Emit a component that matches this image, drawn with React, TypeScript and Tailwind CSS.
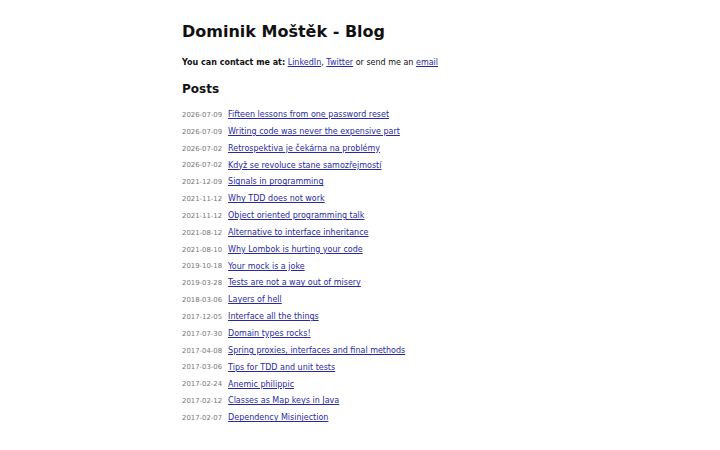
import React from 'react';

const posts: [string, string][] = [
    ['2026-07-09', 'Fifteen lessons from one password reset'],
    ['2026-07-09', 'Writing code was never the expensive part'],
    ['2026-07-02', 'Retrospektiva je čekárna na problémy'],
    ['2026-07-02', 'Když se revoluce stane samozřejmostí'],
    ['2021-12-09', 'Signals in programming'],
    ['2021-11-12', 'Why TDD does not work'],
    ['2021-11-12', 'Object oriented programming talk'],
    ['2021-08-12', 'Alternative to interface inheritance'],
    ['2021-08-10', 'Why Lombok is hurting your code'],
    ['2019-10-18', 'Your mock is a joke'],
    ['2019-03-28', 'Tests are not a way out of misery'],
    ['2018-03-06', 'Layers of hell'],
    ['2017-12-05', 'Interface all the things'],
    ['2017-07-30', 'Domain types rocks!'],
    ['2017-04-08', 'Spring proxies, interfaces and final methods'],
    ['2017-03-06', 'Tips for TDD and unit tests'],
    ['2017-02-24', 'Anemic philippic'],
    ['2017-02-12', 'Classes as Map keys in Java'],
    ['2017-02-07', 'Dependency Misinjection'],
];

export default function App() {
    return (
        <div className="min-h-[450px] bg-white text-[#111] font-['DejaVu_Sans',sans-serif]">
            <div className="pl-[182px] pt-[22px]">
                <h1 className="text-[16px] leading-[20px] font-bold">Dominik Moštěk - Blog</h1>

                {/* Contact */}
                <p className="mt-[15px] text-[8px] leading-[12px]">
                    <b>You can contact me at:</b>{' '}
                    <a href="#" className="underline text-[#2a2aa0]">LinkedIn</a>,{' '}
                    <a href="#" className="underline text-[#2a2aa0]">Twitter</a> or send me an{' '}
                    <a href="#" className="underline text-[#2a2aa0]">email</a>
                </p>

                <h2 className="mt-[12px] text-[12px] leading-[16px] font-bold">Posts</h2>

                {/* Post list */}
                <ul className="mt-[9.6px]">
                    {posts.map(([date, title]) => (
                        <li key={date + title} className="flex items-center h-[16.85px] gap-[6px]">
                            <span className="text-[6.9px] text-[#777]">{date}</span>
                            <a href="#" className="text-[8px] underline text-[#2a2aa0]">{title}</a>
                        </li>
                    ))}
                </ul>
            </div>
        </div>
    );
}
